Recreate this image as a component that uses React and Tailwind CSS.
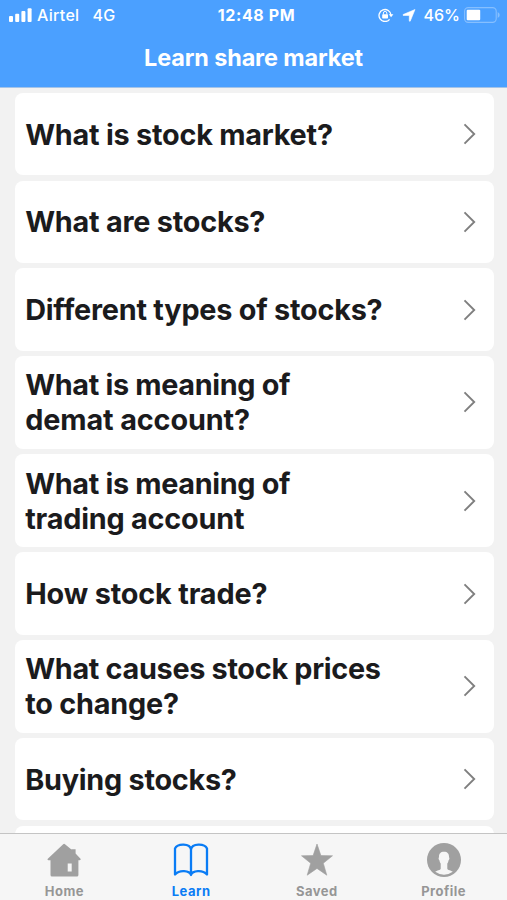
const topics = [
  [{ text: 'What is stock market?', spacing: 'tracking-[-0.22px]' }],
  [{ text: 'What are stocks?', spacing: 'tracking-[-0.22px]' }],
  [{ text: 'Different types of stocks?', spacing: 'tracking-[-0.22px]' }],
  [
    { text: 'What is meaning of', spacing: 'tracking-[-0.33px]' },
    { text: 'demat account?', spacing: 'tracking-[-0.12px]' },
  ],
  [
    { text: 'What is meaning of', spacing: 'tracking-[-0.33px]' },
    { text: 'trading account', spacing: 'tracking-[-0.2px]' },
  ],
  [{ text: 'How stock trade?', spacing: 'tracking-[-0.15px]' }],
  [
    { text: 'What causes stock prices', spacing: 'tracking-[-0.3px]' },
    { text: 'to change?', spacing: 'tracking-[-0.2px]' },
  ],
  [{ text: 'Buying stocks?', spacing: 'tracking-[-0.25px]' }],
  [],
];

function StatusBar() {
  return (
    <div className="grid h-[30px] grid-cols-[1fr_auto_1fr] items-center pr-[7px] pl-[9px] text-[16px]">
      <div className="flex items-center font-medium whitespace-pre">
        <svg width="23" height="14" viewBox="0 0 23 14" fill="#fff">
          <rect x="0" y="8" width="4" height="6" rx="1" />
          <rect x="6.2" y="5.7" width="4" height="8.3" rx="1" />
          <rect x="12.4" y="3" width="4" height="11" rx="1" />
          <rect x="18.6" y="0.3" width="4" height="13.7" rx="1" />
        </svg>
        <span className="ml-[5px] tracking-[0.3px]">Airtel</span>
        <span className="ml-[13px] tracking-[0.3px]">4G</span>
      </div>
      <div className="pl-[4px] font-bold tracking-[0.6px]">12:48 PM</div>
      <div className="flex items-center justify-end">
        <svg width="16" height="14" viewBox="0 0 16 14" fill="none" stroke="#fff">
          <path d="M11.6 11.4A6 6 0 1 1 13 7" strokeWidth="1.3" />
          <path d="M10.8 6.3h4.6L13.1 9.3z" fill="#fff" stroke="none" />
          <rect x="4.2" y="6.2" width="5.8" height="4.2" rx="0.7" fill="#fff" stroke="none" />
          <path d="M5.4 6.5V5.1a1.7 1.7 0 0 1 3.4 0v1.4" strokeWidth="1" />
        </svg>
        <svg className="ml-[8px]" width="14" height="13" viewBox="0 0 14 13" fill="#fff" stroke="#fff" strokeWidth="0.6" strokeLinejoin="round">
          <path d="M13 0.5 8.2 12.2Q7.6 12.5 7.3 12V6.4H1.2Q0.4 6 1.2 5.5z" />
        </svg>
        <span className="ml-[8px] font-medium">46%</span>
        <svg className="ml-[4px]" width="36" height="16" viewBox="0 0 36 16">
          <rect x="0.6" y="0.6" width="31.6" height="14.8" rx="3.6" fill="none" stroke="#86bfff" strokeWidth="1.1" />
          <rect x="2.7" y="2.8" width="13.5" height="10.4" rx="1" fill="#fff" />
          <path d="M33.7 5q2 .8 2 3t-2 3z" fill="#86bfff" />
        </svg>
      </div>
    </div>
  );
}

function Topic({ lines }) {
  return (
    <li
      className={`flex shrink-0 items-center justify-between rounded-[8px] bg-white pr-[18px] pl-[10.5px] ${
        lines.length > 1 ? 'h-[92.8px]' : 'h-[82.2px]'
      }`}
    >
      <div className="text-[28.8px] leading-[35px] font-bold text-[#1b1b1d]">
        {lines.map(({ text, spacing }) => (
          <div key={text} className={`whitespace-nowrap ${spacing}`}>{text}</div>
        ))}
      </div>
      <svg width="13" height="22" viewBox="0 0 13 22" fill="none" stroke="#7f7f7f" strokeWidth="1.9">
        <path d="M1.5 1.3 11.2 11 1.5 20.7" />
      </svg>
    </li>
  );
}

function HomeIcon() {
  return (
    <svg width="34" height="34" viewBox="0 0 34 34" fill="#a0a0a0">
      <path
        fillRule="evenodd"
        d="M16.2 1.2q.9-.7 1.8 0l6.4 5.2V6.2h4.2v4.3l4.9 5.2q.6 1.4-.9 1.5h-1.2V32q0 1.5-1.5 1.5H5Q3.5 33.5 3.5 32V17.2h-2Q0 17 .8 15.7zM20.7 20.5v8h4v-8z"
      />
    </svg>
  );
}

function BookIcon() {
  return (
    <svg width="36" height="34" viewBox="0 0 36 34" fill="none" stroke="#0a7cf5" strokeWidth="2.3" strokeLinejoin="round" strokeLinecap="round">
      <path d="M18 6.5C17 .2 4.5 .2 2 5.5V31.500C6.5 26.5 16.5 27.5 18 32C19.5 27.5 29.5 26.5 34 31.500V5.5C31.5 .2 19 .2 18 6.5zV32" />
    </svg>
  );
}

function StarIcon() {
  return (
    <svg width="34" height="34" viewBox="0 0 34 34" fill="#a0a0a0">
      <path d="M17 1 20.9 12.6 32.5 12.8 23.3 20.2 26.8 32.2 17 25.4 7.2 32.2 10.7 20.2 1.5 12.8 13.1 12.6z" stroke="#a0a0a0" strokeWidth=".6" strokeLinejoin="round" />
    </svg>
  );
}

function ProfileIcon() {
  return (
    <svg width="34" height="34" viewBox="0 0 34 34">
      <circle cx="17" cy="17" r="17" fill="#a0a0a0" />
      <path
        d="M17 8.7c-3.7 0-5.2 2.3-5 5.6-.8.5-.3 2.7.5 3.3.2 1.6.8 2.4 1.2 3v5.200c-.3 1.700-3.900 1.500-5.400 3A14.500 14.500 0 0 0 25.700 28.800c-1.500-1.500-5.100-1.300-5.400-3v-5.200c.4-.6 1-1.4 1.2-3 .8-.6 1.300-2.800.5-3.300.2-3.300-1.300-5.600-5-5.600z"
        fill="#f6f6f6"
      />
    </svg>
  );
}

const tabs = [
  { label: 'Home', Icon: HomeIcon, inset: 'pl-[2px]' },
  { label: 'Learn', Icon: BookIcon, active: true, inset: 'pl-[2px]' },
  { label: 'Saved', Icon: StarIcon, inset: 'pl-0' },
  { label: 'Profile', Icon: ProfileIcon, inset: 'pl-0' },
];

export default function App() {
  return (
    <div className="flex h-[900px] w-[507px] flex-col overflow-hidden bg-[#f2f2f2] font-[Inter,'Liberation_Sans',sans-serif]">
      <header className="h-[88px] shrink-0 border-b border-[#a5c4e8] bg-[#4ba0ff] text-white">
        <StatusBar />
        <h1 className="mt-[13px] text-center text-[23.4px] leading-[30px] font-bold tracking-[-0.1px]">Learn share market</h1>
      </header>
      <ul className="flex min-h-0 flex-1 flex-col gap-[5.4px] overflow-hidden pt-[5.3px] pr-[13.5px] pl-[14.7px]">
        {topics.map((lines, i) => (
          <Topic key={i} lines={lines} />
        ))}
      </ul>
      <nav className="grid h-[67px] shrink-0 grid-cols-4 border-t border-[#c4c4c4] bg-[#f6f6f6]">
        {tabs.map(({ label, Icon, active, inset }) => (
          <div key={label} className={`flex flex-col items-center pt-[9px] ${inset} ${active ? 'text-[#0a7cf5]' : 'text-[#969696]'}`}>
            <Icon />
            <span className="mt-[5px] text-[13px] leading-[18px] font-bold tracking-[0.5px]">{label}</span>
          </div>
        ))}
      </nav>
    </div>
  );
}
